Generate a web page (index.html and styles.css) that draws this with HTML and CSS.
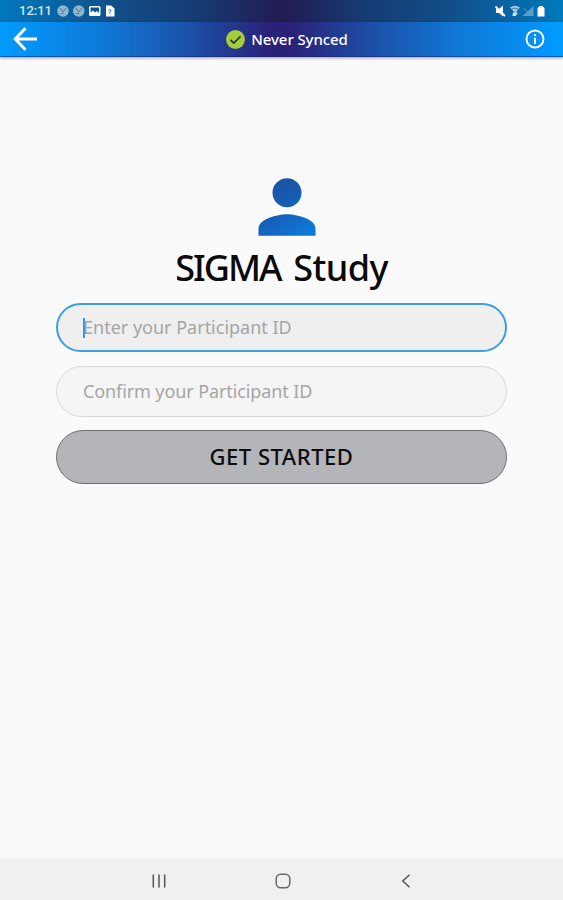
FILE: index.html
```html
<!DOCTYPE html>
<html lang="en">
<head>
	<meta charset="utf-8">
	<meta name="viewport" content="width=device-width, initial-scale=1.0">
	<title>SIGMA Study</title>
	<link rel="stylesheet" href="styles.css">
</head>
<body>
	<div class="status">
		<span class="clock">12:11</span>
		<svg class="notes" width="60" height="14" viewBox="0 0 60 14">
			<g fill="#8fb8d0">
				<circle cx="6" cy="7" r="5.8"/>
				<circle cx="21.7" cy="7" r="5.8"/>
			</g>
			<g fill="none" stroke="#3d7ba6" stroke-width="1">
				<path d="M3 4l3 4 3-4M3.500 9.500h3M18.700 4l3 4 3-4M19.200 9.500h3"/>
			</g>
			<path fill="#fff" fill-rule="evenodd" d="M33.500 2h8.500q1.500 0 1.500 1.500v7q0 1.500-1.500 1.500h-8.500q-1.500 0-1.500-1.500v-7q0-1.500 1.500-1.500zM33.500 3.500v5l2.500-2 2 2 2-1.500 2 2V3.500z"/>
			<path fill="#fff" d="M49 1.500h5l3.500 3v8H49z"/>
			<path fill="none" stroke="#2c6c9a" d="M51.500 6.500q1.500-1.500 2.500 0 0 1-1.200 1.700v1.500"/>
		</svg>
		<svg class="signal" width="54" height="14" viewBox="0 0 54 14">
			<path fill="#fff" d="M2 5h3l4-3.500v11L5 9H2z"/>
			<path stroke="#fff" stroke-width="1.800" d="M1.500 2.500l9.500 9.500"/>
			<path fill="#a9c8df" d="M16 3.500q5-3.500 10 0l-5 5.500z"/>
			<path fill="none" stroke="#2a669a" stroke-width=".8" d="M17.500 5.200q3.500-2 7 0"/>
			<path fill="#d5e5f0" d="M19 8.500h5l-2.500 3.500h-3z"/>
			<path fill="#5b9dcb" d="M39.500 2v10h-11z"/>
			<path stroke="#5b9dcb" d="M29.500 4l4 4"/>
			<path fill="#fff" d="M43.500 4.500q0-1.500 1.500-1.500v-1h4v1q1.500 0 1.500 1.500v8h-7z"/>
		</svg>
	</div>
	<header class="bar">
		<svg class="back" width="24" height="24" viewBox="0 0 24 24" fill="none" stroke="#fff" stroke-width="3">
			<path d="M12.500 1.200L2.200 12l10.300 10.800M2 12h22"/>
		</svg>
		<div class="sync">
			<svg width="19" height="19" viewBox="0 0 19 19">
				<circle cx="9.500" cy="9.500" r="9.400" fill="#a6ce39"/>
				<path d="M4.500 9.800l3.300 3.200 6.700-6.700" fill="none" stroke="#263238" stroke-width="1.700"/>
			</svg>
			<span>Never Synced</span>
		</div>
		<svg class="info" width="20" height="20" viewBox="0 0 20 20">
			<circle cx="10" cy="10" r="8.500" fill="none" stroke="#fff" stroke-width="1.900"/>
			<path d="M9 5h2v2H9zM9 8.800h2V15H9z" fill="#fff"/>
		</svg>
	</header>
	<main>
		<svg class="person" width="58" height="58" viewBox="0 0 58 58">
			<defs>
				<linearGradient id="blue" gradientUnits="userSpaceOnUse" x1="8" y1="0" x2="50" y2="58">
					<stop offset="0" stop-color="#1d50a2"/>
					<stop offset=".4" stop-color="#175bb0"/>
					<stop offset="1" stop-color="#0b7bdc"/>
				</linearGradient>
			</defs>
			<g fill="url(#blue)">
				<circle cx="29" cy="14.700" r="14.500"/>
				<path d="M.5 57.800V50.500C.5 41 19.500 36.200 29 36.200s28.500 4.800 28.500 14.300v7.300z"/>
			</g>
		</svg>
		<h1><span>SIGMA</span> Study</h1>
		<div class="field active"><i class="caret"></i><span>Enter your Participant ID</span></div>
		<div class="field"><span>Confirm your Participant ID</span></div>
		<button class="start">GET STARTED</button>
	</main>
	<nav>
		<svg width="14" height="14" viewBox="0 0 14 14" stroke="#555" stroke-width="1.500">
			<path d="M1.300 .5v13M7 .5v13M12.700 .5v13"/>
		</svg>
		<svg width="16" height="16" viewBox="0 0 16 16" fill="none" stroke="#666" stroke-width="1.500">
			<rect x="1.200" y="1.200" width="13.600" height="13.600" rx="4.500"/>
		</svg>
		<svg width="10" height="14" viewBox="0 0 10 14" fill="none" stroke="#555" stroke-width="1.500">
			<path d="M8.500 .8L1.800 7l6.700 6.200"/>
		</svg>
	</nav>
</body>
</html>
```
FILE: styles.css
```css
body {
	margin: 0;
	height: 900px;
	display: flex;
	flex-direction: column;
	overflow: hidden;
	background: #fafafa;
	font-family: "Noto Sans", sans-serif;
}
.status {
	height: 22px;
	display: flex;
	align-items: center;
	box-sizing: border-box;
	padding: 0 15px 0 19px;
	background: linear-gradient(90deg, #0079bd 0%, #114f89 20%, #163a72 36%, #231b52 50%, #163a72 64%, #114f89 80%, #0079bd 100%);
}
.clock {
	width: 38px;
	color: #d3e4ef;
	font: 500 13px/22px Roboto, sans-serif;
}
.signal {
	margin-left: auto;
}
.bar {
	height: 35px;
	display: grid;
	grid-template-columns: 1fr auto 1fr;
	align-items: center;
	padding: 0 18px 0 13px;
	border-bottom: 1px solid rgba(20, 30, 110, .5);
	box-sizing: border-box;
	background: linear-gradient(90deg, #009bff 0%, #0f7ad8 18%, #1c4fa6 34%, #2a2278 48%, #2a2278 52%, #1c4fa6 66%, #0f7ad8 82%, #009bff 100%);
	box-shadow: 0 1px 3px rgba(0, 0, 0, .4);
}
.sync {
	display: flex;
	align-items: center;
	gap: 6px;
	margin-left: 16px;
	color: #fff;
	font-size: 15px;
	font-weight: 500;
	line-height: 20px;
	letter-spacing: -.1px;
}
.info {
	justify-self: end;
}
main {
	flex: 1;
	display: flex;
	flex-direction: column;
	padding: 121px 56px 0;
}
.person {
	align-self: center;
	margin-left: 10px;
}
h1 {
	margin: 7px 0 10px;
	color: #0a0a0a;
	font-size: 36px;
	font-weight: 500;
	line-height: 50px;
	letter-spacing: -.6px;
	word-spacing: 4px;
	text-align: center;
	white-space: nowrap;
}
h1 span {
	letter-spacing: -2px;
}
.field {
	position: relative;
	height: 51px;
	display: flex;
	align-items: center;
	box-sizing: border-box;
	margin-bottom: 13px;
	padding: 0 26px 1px;
	border: 1px solid #d8d8d8;
	border-radius: 26px;
	background: #f5f5f5;
	color: #a5a5a5;
	font-size: 18px;
	letter-spacing: -.1px;
	white-space: nowrap;
}
.field.active {
	height: 49px;
	margin-bottom: 14px;
	padding: 0 25px 2px;
	border: 2px solid #3b9fe8;
	background: #efefef;
	letter-spacing: 0;
}
.caret {
	position: absolute;
	left: 25px;
	top: 13px;
	width: 2px;
	height: 20px;
	background: #3b95d6;
}
.start {
	height: 54px;
	padding: 0 0 2px;
	border: 1px solid #6f7073;
	border-radius: 27px;
	background: #b4b5b9;
	color: #0c0c0e;
	font: 500 22px "Noto Sans", sans-serif;
	letter-spacing: .5px;
}
nav {
	height: 42px;
	box-sizing: border-box;
	display: flex;
	align-items: center;
	justify-content: space-between;
	padding: 3px 152px 0;
	background: #f0f0f0;
}
nav svg:nth-child(2) {
	margin-right: 2px;
}
```
